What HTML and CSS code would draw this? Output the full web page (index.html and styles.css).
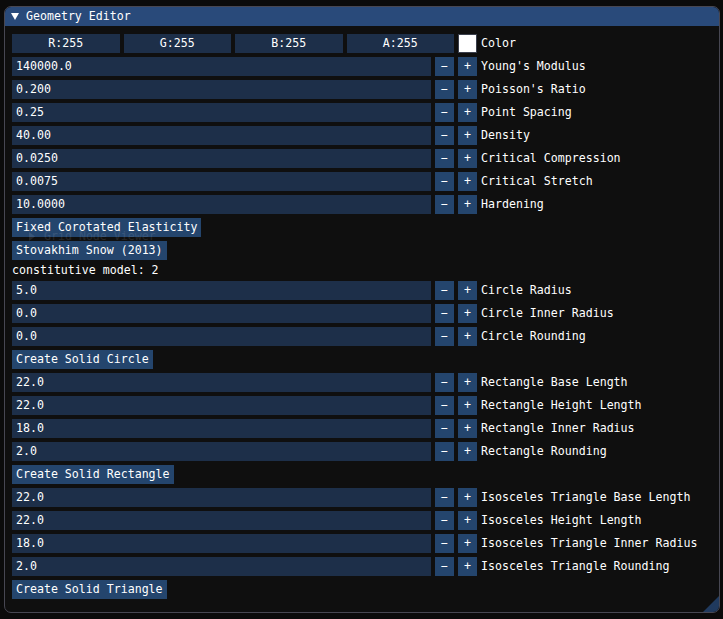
FILE: index.html
```html
<!DOCTYPE html>
<html>
<head>
<meta charset="utf-8">
<link rel="stylesheet" href="styles.css">
</head>
<body>
<div class="window">
  <div class="titlebar">
    <svg class="arrow" width="10" height="9" viewBox="0 0 10 9"><polygon points="1,1 9,1 5,8" fill="#fff"/></svg>
    <span>Geometry Editor</span>
  </div>
  <div class="content">
    <div class="row">
      <div class="rgba">
        <div class="cbox">R:255</div>
        <div class="cbox">G:255</div>
        <div class="cbox">B:255</div>
        <div class="cbox">A:255</div>
      </div>
      <div class="swatch"></div>
      <span class="label">Color</span>
    </div>
    <div class="row"><div class="input">140000.0</div><div class="sbtn">&#8722;</div><div class="sbtn">+</div><span class="label">Young's Modulus</span></div>
    <div class="row"><div class="input">0.200</div><div class="sbtn">&#8722;</div><div class="sbtn">+</div><span class="label">Poisson's Ratio</span></div>
    <div class="row"><div class="input">0.25</div><div class="sbtn">&#8722;</div><div class="sbtn">+</div><span class="label">Point Spacing</span></div>
    <div class="row"><div class="input">40.00</div><div class="sbtn">&#8722;</div><div class="sbtn">+</div><span class="label">Density</span></div>
    <div class="row"><div class="input">0.0250</div><div class="sbtn">&#8722;</div><div class="sbtn">+</div><span class="label">Critical Compression</span></div>
    <div class="row"><div class="input">0.0075</div><div class="sbtn">&#8722;</div><div class="sbtn">+</div><span class="label">Critical Stretch</span></div>
    <div class="row"><div class="input">10.0000</div><div class="sbtn">&#8722;</div><div class="sbtn">+</div><span class="label">Hardening</span></div>
    <div class="row"><div class="btn">Fixed Corotated Elasticity</div></div>
    <div class="row"><div class="btn">Stovakhim Snow (2013)</div></div>
    <div class="text">constitutive model: 2</div>
    <div class="row"><div class="input">5.0</div><div class="sbtn">&#8722;</div><div class="sbtn">+</div><span class="label">Circle Radius</span></div>
    <div class="row"><div class="input">0.0</div><div class="sbtn">&#8722;</div><div class="sbtn">+</div><span class="label">Circle Inner Radius</span></div>
    <div class="row"><div class="input">0.0</div><div class="sbtn">&#8722;</div><div class="sbtn">+</div><span class="label">Circle Rounding</span></div>
    <div class="row"><div class="btn">Create Solid Circle</div></div>
    <div class="row"><div class="input">22.0</div><div class="sbtn">&#8722;</div><div class="sbtn">+</div><span class="label">Rectangle Base Length</span></div>
    <div class="row"><div class="input">22.0</div><div class="sbtn">&#8722;</div><div class="sbtn">+</div><span class="label">Rectangle Height Length</span></div>
    <div class="row"><div class="input">18.0</div><div class="sbtn">&#8722;</div><div class="sbtn">+</div><span class="label">Rectangle Inner Radius</span></div>
    <div class="row"><div class="input">2.0</div><div class="sbtn">&#8722;</div><div class="sbtn">+</div><span class="label">Rectangle Rounding</span></div>
    <div class="row"><div class="btn">Create Solid Rectangle</div></div>
    <div class="row"><div class="input">22.0</div><div class="sbtn">&#8722;</div><div class="sbtn">+</div><span class="label">Isosceles Triangle Base Length</span></div>
    <div class="row"><div class="input">22.0</div><div class="sbtn">&#8722;</div><div class="sbtn">+</div><span class="label">Isosceles Height Length</span></div>
    <div class="row"><div class="input">18.0</div><div class="sbtn">&#8722;</div><div class="sbtn">+</div><span class="label">Isosceles Triangle Inner Radius</span></div>
    <div class="row"><div class="input">2.0</div><div class="sbtn">&#8722;</div><div class="sbtn">+</div><span class="label">Isosceles Triangle Rounding</span></div>
    <div class="row"><div class="btn">Create Solid Triangle</div></div>
  </div>
  <div class="ghost">
    <svg width="7" height="9" viewBox="0 0 7 9"><polygon points="0,0 6,4.5 0,9" fill="#fff"/></svg>
    <span>Grid Node Viewer</span>
  </div>
  <div class="grip"></div>
</div>
</body>
</html>
```

FILE: styles.css
```css
html, body {
  margin: 0;
  padding: 0;
  background: #0b0b0b;
}
body {
  font-family: "DejaVu Sans Mono", "Liberation Mono", monospace;
  font-size: 11.6px;
  color: #ffffff;
  width: 723px;
  height: 619px;
  overflow: hidden;
}
.window {
  position: relative;
  margin: 6px 0 0 4px;
  width: 714px;
  height: 605px;
  border: 1px solid #474752;
  border-radius: 7px;
  background: #0f0f0f;
  overflow: hidden;
}
.titlebar {
  height: 19px;
  background: #294a7a;
  display: flex;
  align-items: center;
  line-height: 13px;
}
.arrow {
  margin-left: 5px;
  margin-right: 6px;
  margin-top: 0;
}
.content {
  padding: 8px 7px;
  display: flex;
  flex-direction: column;
  gap: 4px;
}
.row {
  display: flex;
  gap: 4px;
  height: 19px;
  align-items: center;
}
.rgba {
  width: 442px;
  display: flex;
  gap: 4px;
}
.cbox {
  flex: 1;
  height: 19px;
  line-height: 19px;
  text-align: center;
  background: #1d2f49;
}
.swatch {
  width: 17px;
  height: 17px;
  background: #ffffff;
  border: 1px solid #3a3f4c;
}
.input {
  width: 415px;
  height: 19px;
  line-height: 19px;
  padding-left: 4px;
  background: #1d2f49;
}
.sbtn {
  width: 19px;
  height: 19px;
  line-height: 19px;
  text-align: center;
  background: #24456d;
}
.label {
  line-height: 19px;
  white-space: nowrap;
}
.btn {
  height: 19px;
  line-height: 19px;
  padding: 0 4px;
  background: #24456d;
  white-space: nowrap;
}
.text {
  height: 13px;
  line-height: 13px;
}
.ghost {
  position: absolute;
  left: 24px;
  top: 223px;
  display: flex;
  align-items: center;
  gap: 8px;
  line-height: 13px;
  opacity: 0.09;
  pointer-events: none;
}
.grip {
  position: absolute;
  right: 0;
  bottom: 0;
  width: 16px;
  height: 16px;
  background: #203a5e;
  clip-path: polygon(100% 0, 100% 100%, 0 100%);
}
```
